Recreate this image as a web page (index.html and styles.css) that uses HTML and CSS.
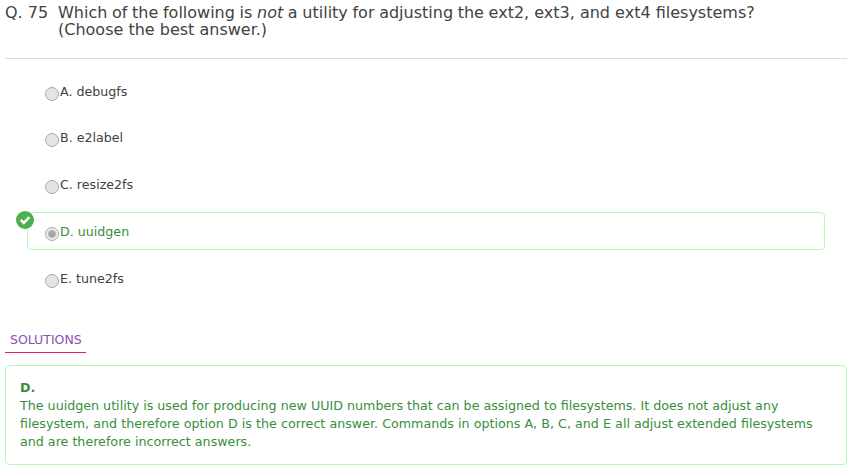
FILE: index.html
```html
<!DOCTYPE html>
<html lang="en">
<head>
<meta charset="utf-8">
<title>Question 75</title>
<link rel="stylesheet" href="styles.css">
</head>
<body>
<header class="question">
  <span class="number">Q. 75</span>
  <div class="prompt"><div><span class="tight">Which of the following is <em>not</em> a utility for adjusting the </span>ext2, ext3, and ext4 filesystems?</div><div>(Choose the best answer.)</div></div>
</header>
<main>
  <div class="options">
    <div class="option"><i class="radio"></i><span>A. debugfs</span></div>
    <div class="option"><i class="radio"></i><span>B. e2label</span></div>
    <div class="option"><i class="radio"></i><span>C. resize2fs</span></div>
    <div class="option correct">
      <svg class="badge" viewBox="0 0 18 18"><circle cx="9" cy="9" r="9"/><path d="M4.8 8.8l3 3 5.6-5.6"/></svg>
      <i class="radio checked"></i><span>D. uuidgen</span>
    </div>
    <div class="option"><i class="radio"></i><span>E. tune2fs</span></div>
  </div>
  <div class="tab">SOLUTIONS</div>
  <section class="solution">
    <strong>D.</strong>
    <p>The uuidgen utility is used for producing new UUID numbers that can be assigned to filesystems. It does not adjust any<br><span class="wide">filesystem, and therefore option D is the correct answer. Commands in options A, B, C, and E all adjust extended filesystems</span><br>and are therefore incorrect answers.</p>
  </section>
</main>
</body>
</html>
```

FILE: styles.css
```css
* { box-sizing: border-box; }
body {
  margin: 0;
  padding: 0 15px 0 5px;
  height: 471px;
  overflow: hidden;
  background: #fff;
  color: #424242;
  font: 13px/18px "DejaVu Sans", sans-serif;
}
.question {
  display: flex;
  height: 59px;
  padding-top: 4px;
  border-bottom: 1px solid #ddd;
  font-size: 16px;
  line-height: 17px;
  white-space: nowrap;
}
.number { width: 53px; flex: none; }
.tight { word-spacing: -0.43px; }
.wide { word-spacing: 0.08px; }
.options { padding: 14px 22px 0; }
.option {
  position: relative;
  display: flex;
  height: 38px;
  margin-bottom: 9px;
  padding: 9px 0 0 17px;
  border: 1px solid transparent;
  border-radius: 4px;
  font-size: 12.65px;
}
.option:nth-child(1), .option:nth-child(3) { margin-bottom: 8px; }
.radio {
  width: 14px;
  height: 14px;
  margin: 4px 1px 0 0;
  border: 1px solid #aaa;
  border-radius: 50%;
  background: #e4e4e4;
}
.checked { background: radial-gradient(circle, #a6a6a6 0 3.2px, #ececec 4.5px); }
.option.correct { margin-bottom: 10px; padding-top: 10px; border-color: #b5f8b8; color: #388e3c; }
.option.correct + .option { margin-top: -1px; padding-top: 10px; }
.badge {
  position: absolute;
  left: -12px;
  top: -2px;
  width: 18px;
  height: 18px;
}
.badge circle { fill: #4caf50; }
.badge path { fill: none; stroke: #fff; stroke-width: 2.6; }
.tab {
  width: 81px;
  height: 22px;
  margin-top: 34px;
  padding-left: 5px;
  border-bottom: 1px solid #e91e63;
  color: #8e4db5;
  font-size: 12.5px;
}
.solution {
  height: 100px;
  margin-top: 12px;
  padding: 13px 14px 0;
  border: 1px solid #b5f8b8;
  border-radius: 4px;
  color: #388e3c;
  font-size: 12.68px;
  white-space: nowrap;
}
.solution strong { display: block; }
.solution p { margin: 0; }
```
